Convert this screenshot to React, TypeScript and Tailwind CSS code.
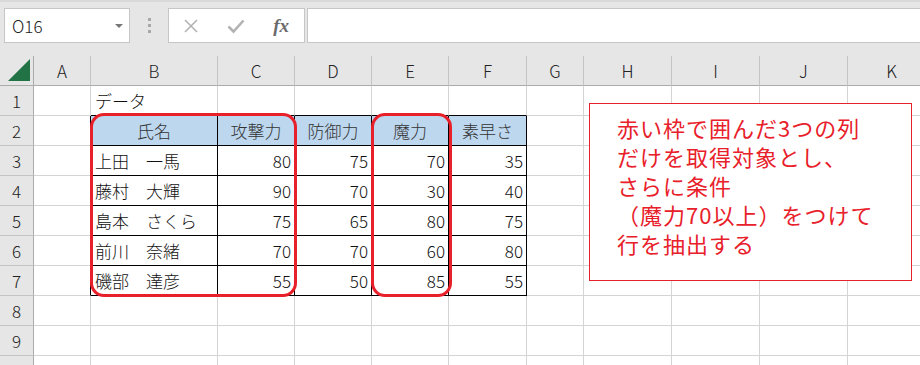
const COLS = ['A', 'B', 'C', 'D', 'E', 'F', 'G', 'H', 'I', 'J', 'K'];

type Cell = { text: string; align?: 'left' | 'center' | 'right' };

const rows: Record<number, Record<string, Cell>> = {
  1: { B: { text: 'データ' } },
  2: {
    B: { text: '氏名', align: 'center' },
    C: { text: '攻撃力', align: 'center' },
    D: { text: '防御力', align: 'center' },
    E: { text: '魔力', align: 'center' },
    F: { text: '素早さ', align: 'center' },
  },
};

const people: [string, number, number, number, number][] = [
  ['上田　一馬', 80, 75, 70, 35],
  ['藤村　大輝', 90, 70, 30, 40],
  ['島本　さくら', 75, 65, 80, 75],
  ['前川　奈緒', 70, 70, 60, 80],
  ['磯部　達彦', 55, 50, 85, 55],
];

people.forEach(([name, a, d, m, s], i) => {
  rows[i + 3] = {
    B: { text: name },
    C: { text: String(a), align: 'right' },
    D: { text: String(d), align: 'right' },
    E: { text: String(m), align: 'right' },
    F: { text: String(s), align: 'right' },
  };
});

const inTable = (r: number, c: string) => r >= 2 && r <= 7 && 'BCDEF'.includes(c);

function cellBorder(r: number, c: string) {
  if (inTable(r, c)) return 'border-r border-b border-black';
  if (r === 1 && 'BCDEF'.includes(c)) return 'border-r border-b border-r-[#d4d4d4] border-b-black';
  if (c === 'A' && r >= 2 && r <= 7) return 'border-r border-b border-r-black border-b-[#d4d4d4]';
  return 'border-r border-b border-[#d4d4d4]';
}

function alignClass(a?: 'left' | 'center' | 'right') {
  if (a === 'center') return 'justify-center';
  if (a === 'right') return 'justify-end pr-[3px]';
  return 'justify-start pl-[4px]';
}

export default function App() {
  const rowNums = [1, 2, 3, 4, 5, 6, 7, 8, 9, 10];

  return (
    <div
      className="relative w-[920px] h-[365px] overflow-hidden bg-white text-black"
      style={{ fontFamily: '"Noto Sans CJK JP", "Noto Sans", sans-serif' }}
    >
      {/* Formula bar */}
      <div className="h-[56px] bg-[#e6e6e6] border-t-2 border-[#d9d9d9] flex items-start pt-[6px] pl-[4px]">
        <div className="w-[126px] h-[35px] bg-white border border-[#c6c6c6] flex items-center pl-[7px] pr-[6px]">
          <span className="flex-1 text-[17px] font-light text-[#222]">O16</span>
          <span className="w-0 h-0 border-l-[4px] border-r-[4px] border-t-[4px] border-l-transparent border-r-transparent border-t-[#777]" />
        </div>
        <div className="w-[38px] h-[35px] flex flex-col items-center justify-center gap-[3px]">
          <span className="w-[3px] h-[3px] bg-[#a8a8a8]" />
          <span className="w-[3px] h-[3px] bg-[#a8a8a8]" />
          <span className="w-[3px] h-[3px] bg-[#a8a8a8]" />
        </div>
        <div className="w-[137px] h-[35px] bg-white border border-[#c6c6c6] flex items-center">
          <span className="w-[44px] flex justify-center">
            <svg width="16" height="16" viewBox="0 0 16 16" aria-hidden="true">
              <path d="M2 2l12 12M14 2L2 14" stroke="#b3b3b3" strokeWidth="1.6" />
            </svg>
          </span>
          <span className="w-[46px] flex justify-center">
            <svg width="18" height="16" viewBox="0 0 18 16" aria-hidden="true">
              <path d="M1.5 8.5l5 5L16.5 2.5" fill="none" stroke="#b3b3b3" strokeWidth="2.6" />
            </svg>
          </span>
          <span
            className="w-[46px] flex justify-center text-[19px] italic font-bold text-[#6b6b6b] leading-none"
            style={{ fontFamily: '"Liberation Serif", serif' }}
          >
            fx
          </span>
        </div>
        <div className="flex-1 h-[35px] ml-[2px] bg-white border border-[#c6c6c6] border-r-0" />
      </div>

      {/* Sheet */}
      <div className="grid grid-cols-[34px_57px_127px_77px_77px_77px_78px_57px_88px_88px_88px_88px] auto-rows-[30px] text-[17px] font-light">
        {/* corner */}
        <div className="bg-[#e6e6e6] border-r border-b border-[#ababab] flex items-end justify-end pr-[3px] pb-[4px]">
          <svg width="22" height="22" viewBox="0 0 22 22" aria-hidden="true">
            <path d="M22 0V22H0Z" fill="#217346" />
          </svg>
        </div>
        {COLS.map((c) => (
          <div
            key={c}
            className="bg-[#e6e6e6] border-r border-b border-r-[#c4c4c4] border-b-[#ababab] flex items-center justify-center text-[#222]"
          >
            {c}
          </div>
        ))}
        {rowNums.map((r) => (
          <div key={r} className="contents">
            <div className="bg-[#e6e6e6] border-r border-b border-r-[#ababab] border-b-[#c4c4c4] flex items-center justify-center text-[#222]">
              {r}
            </div>
            {COLS.map((c) => {
              const cell = rows[r]?.[c];
              const blue = r === 2 && 'BCDEF'.includes(c);
              return (
                <div
                  key={c}
                  className={`${cellBorder(r, c)} ${blue ? 'bg-[#bdd7ee] text-[#333]' : 'text-[#111]'} flex items-center whitespace-nowrap ${alignClass(cell?.align)}`}
                >
                  {cell?.text}
                </div>
              );
            })}
          </div>
        ))}
      </div>

      {/* Red outlines around selected columns */}
      <div className="absolute left-[90px] top-[113px] w-[207px] h-[184px] border-[3px] border-[#e8202a] rounded-[14px]" />
      <div className="absolute left-[371px] top-[113px] w-[81px] h-[184px] border-[3px] border-[#e8202a] rounded-[14px]" />

      {/* Note shape */}
      <div className="absolute left-[589px] top-[103px] w-[323px] h-[178px] bg-white border border-[#e8202a] pl-[27px] pt-[9px] text-[22px] leading-[29px] tracking-[1px] text-[#e8202a]">
        <p>赤い枠で囲んだ3つの列</p>
        <p>だけを取得対象とし、</p>
        <p>さらに条件</p>
        <p>（魔力70以上）をつけて</p>
        <p>行を抽出する</p>
      </div>
    </div>
  );
}
